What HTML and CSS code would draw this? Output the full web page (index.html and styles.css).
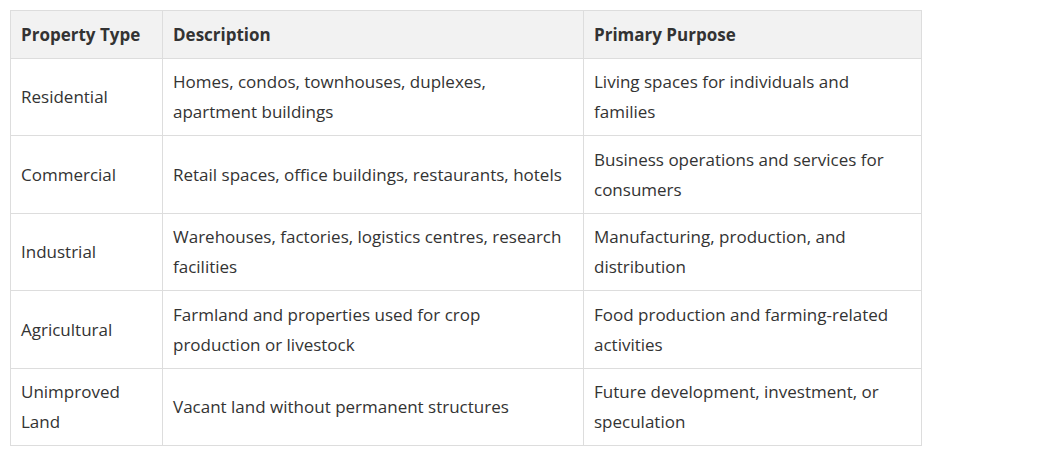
FILE: index.html
```html
<!DOCTYPE html>
<html>
<head>
<meta charset="utf-8">
<link rel="stylesheet" href="styles.css">
</head>
<body>
<table class="ptable">
  <colgroup>
    <col class="c1"><col class="c2"><col class="c3">
  </colgroup>
  <thead>
    <tr><th>Property Type</th><th>Description</th><th>Primary Purpose</th></tr>
  </thead>
  <tbody>
    <tr><td>Residential</td><td>Homes, condos, townhouses, duplexes, apartment buildings</td><td>Living spaces for individuals and families</td></tr>
    <tr><td>Commercial</td><td>Retail spaces, office buildings, restaurants, hotels</td><td>Business operations and services for consumers</td></tr>
    <tr><td>Industrial</td><td>Warehouses, factories, logistics centres, research facilities</td><td>Manufacturing, production, and distribution</td></tr>
    <tr><td>Agricultural</td><td>Farmland and properties used for crop production or livestock</td><td>Food production and farming-related activities</td></tr>
    <tr><td>Unimproved Land</td><td>Vacant land without permanent structures</td><td>Future development, investment, or speculation</td></tr>
  </tbody>
</table>
</body>
</html>
```
FILE: styles.css
```css
html, body {
  margin: 0;
  background: #fff;
}
body {
  padding: 10px 0 0 10px;
  font-family: "Open Sans", "Noto Sans", sans-serif;
  color: #333;
}
.ptable {
  border-collapse: collapse;
  width: 911px;
  table-layout: fixed;
  font-size: 17px;
}
.c1 { width: 152px; }
.c2 { width: 421px; }
.c3 { width: 338px; }
.ptable th, .ptable td {
  border: 1px solid #ddd;
  padding: 8.5px 13px 8.5px 10px;
  text-align: left;
  vertical-align: middle;
  line-height: 1.75;
}
.ptable th {
  background: #f2f2f2;
  font-weight: 700;
}
```
